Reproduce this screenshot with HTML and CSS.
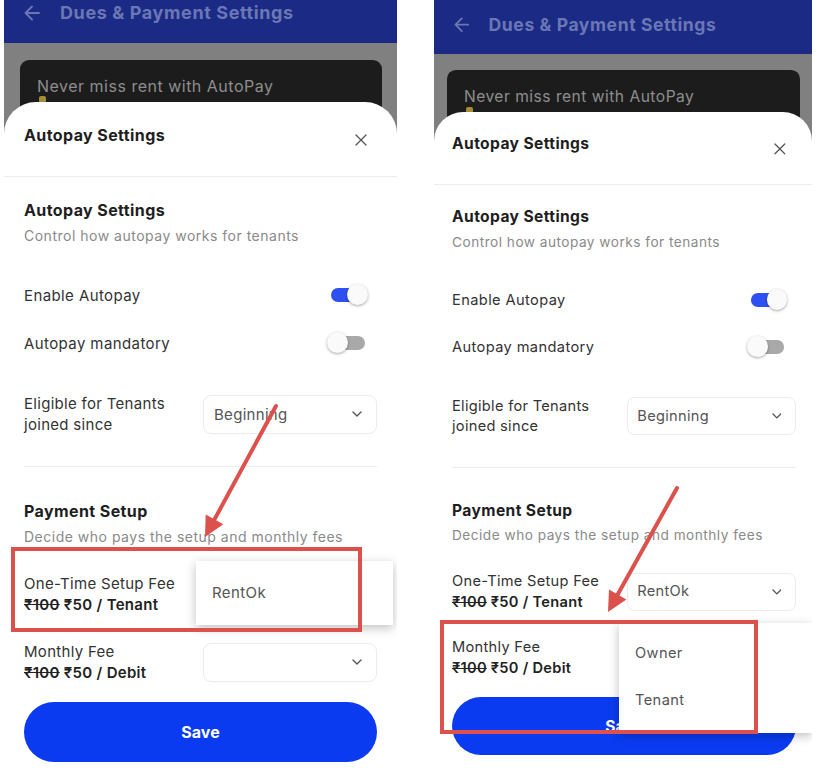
FILE: index.html
```html
<!DOCTYPE html>
<html lang="en">
<head>
    <meta charset="UTF-8">
    <meta name="viewport" content="width=device-width, initial-scale=1.0">
    <title>Autopay Settings</title>
    <link rel="stylesheet" href="styles.css">
</head>
<body>
    <div class="page">
        <!-- Left screen: setup fee dropdown open -->
        <div class="phone">
            <header class="appbar">
                <svg class="back" viewBox="0 0 16 22"><path d="M15 11H2M8 4.5L1.5 11 8 17.5" fill="none" stroke="currentColor" stroke-width="1.8" stroke-linecap="round" stroke-linejoin="round"/></svg>
                <h1>Dues &amp; Payment Settings</h1>
            </header>
            <div class="backdrop">
                <div class="promo">Never miss rent with AutoPay<span class="promo-emoji"></span></div>
            </div>
            <section class="sheet">
                <div class="sheet-head">
                    <h2>Autopay Settings</h2>
                    <svg class="close" viewBox="0 0 12 12"><path d="M1 1l10 10M11 1L1 11" stroke="#555" stroke-width="1.3" stroke-linecap="round"/></svg>
                </div>
                <div class="sheet-body">
                    <h3 class="section-title">Autopay Settings</h3>
                    <p class="section-sub">Control how autopay works for tenants</p>
                    <div class="toggles">
                        <div class="toggle-row"><span>Enable Autopay</span><span class="switch on"></span></div>
                        <div class="toggle-row"><span>Autopay mandatory</span><span class="switch"></span></div>
                    </div>
                    <div class="field-row eligible">
                        <div class="field-label">Eligible for Tenants<br>joined since</div>
                        <div class="select"><span>Beginning</span><svg class="chevron" viewBox="0 0 10 6"><path d="M1 1l4 4 4-4" fill="none" stroke="#555" stroke-width="1.4" stroke-linecap="round" stroke-linejoin="round"/></svg></div>
                    </div>
                    <hr class="divider">
                    <h3 class="section-title">Payment Setup</h3>
                    <p class="section-sub">Decide who pays the setup and monthly fees</p>
                    <div class="field-row fee-first">
                        <div class="field-label">One-Time Setup Fee<br><span class="fee-price"><s>₹100</s> ₹50 / Tenant</span></div>
                        <div class="select"><span></span><svg class="chevron" viewBox="0 0 10 6"><path d="M1 1l4 4 4-4" fill="none" stroke="#555" stroke-width="1.4" stroke-linecap="round" stroke-linejoin="round"/></svg></div>
                    </div>
                    <div class="field-row fee-second">
                        <div class="field-label">Monthly Fee<br><span class="fee-price"><s>₹100</s> ₹50 / Debit</span></div>
                        <div class="select"><span></span><svg class="chevron" viewBox="0 0 10 6"><path d="M1 1l4 4 4-4" fill="none" stroke="#555" stroke-width="1.4" stroke-linecap="round" stroke-linejoin="round"/></svg></div>
                    </div>
                    <button class="save">Save</button>
                </div>
            </section>
            <div class="menu menu-setup">
                <div class="menu-item">RentOk</div>
            </div>
        </div>

        <!-- Right screen: monthly fee dropdown open -->
        <div class="phone phone-right">
            <header class="appbar">
                <svg class="back" viewBox="0 0 16 22"><path d="M15 11H2M8 4.5L1.5 11 8 17.5" fill="none" stroke="currentColor" stroke-width="1.8" stroke-linecap="round" stroke-linejoin="round"/></svg>
                <h1>Dues &amp; Payment Settings</h1>
            </header>
            <div class="backdrop">
                <div class="promo">Never miss rent with AutoPay<span class="promo-emoji"></span></div>
            </div>
            <section class="sheet">
                <div class="sheet-head">
                    <h2>Autopay Settings</h2>
                    <svg class="close" viewBox="0 0 12 12"><path d="M1 1l10 10M11 1L1 11" stroke="#555" stroke-width="1.3" stroke-linecap="round"/></svg>
                </div>
                <div class="sheet-body">
                    <h3 class="section-title">Autopay Settings</h3>
                    <p class="section-sub">Control how autopay works for tenants</p>
                    <div class="toggles">
                        <div class="toggle-row"><span>Enable Autopay</span><span class="switch on"></span></div>
                        <div class="toggle-row"><span>Autopay mandatory</span><span class="switch"></span></div>
                    </div>
                    <div class="field-row eligible">
                        <div class="field-label">Eligible for Tenants<br>joined since</div>
                        <div class="select"><span>Beginning</span><svg class="chevron" viewBox="0 0 10 6"><path d="M1 1l4 4 4-4" fill="none" stroke="#555" stroke-width="1.4" stroke-linecap="round" stroke-linejoin="round"/></svg></div>
                    </div>
                    <hr class="divider">
                    <h3 class="section-title">Payment Setup</h3>
                    <p class="section-sub">Decide who pays the setup and monthly fees</p>
                    <div class="field-row fee-first">
                        <div class="field-label">One-Time Setup Fee<br><span class="fee-price"><s>₹100</s> ₹50 / Tenant</span></div>
                        <div class="select"><span>RentOk</span><svg class="chevron" viewBox="0 0 10 6"><path d="M1 1l4 4 4-4" fill="none" stroke="#555" stroke-width="1.4" stroke-linecap="round" stroke-linejoin="round"/></svg></div>
                    </div>
                    <div class="field-row fee-second">
                        <div class="field-label">Monthly Fee<br><span class="fee-price"><s>₹100</s> ₹50 / Debit</span></div>
                        <div class="select"><span></span><svg class="chevron" viewBox="0 0 10 6"><path d="M1 1l4 4 4-4" fill="none" stroke="#555" stroke-width="1.4" stroke-linecap="round" stroke-linejoin="round"/></svg></div>
                    </div>
                    <button class="save">Save</button>
                </div>
            </section>
            <div class="menu menu-fee">
                <div class="menu-item">Owner</div>
                <div class="menu-item">Tenant</div>
            </div>
        </div>

        <!-- Red annotation marks drawn over both screens -->
        <svg class="annotations" viewBox="0 0 818 768">
            <rect x="13" y="549" width="347" height="81" fill="none" stroke="#dc514c" stroke-width="4"/>
            <line x1="276" y1="406" x2="214.5" y2="519.4" stroke="#dc514c" stroke-width="4" stroke-linecap="round"/>
            <polygon points="205,537 223.3,524.2 205.7,514.6" fill="#dc514c"/>
            <rect x="442" y="622" width="314" height="110" fill="none" stroke="#dc514c" stroke-width="4"/>
            <line x1="677" y1="488" x2="617.7" y2="594.5" stroke="#dc514c" stroke-width="4" stroke-linecap="round"/>
            <polygon points="608,612 626.4,599.4 609,589.6" fill="#dc514c"/>
        </svg>
    </div>
</body>
</html>
```

FILE: styles.css
```css
* {
    margin: 0;
    padding: 0;
    box-sizing: border-box;
}

body {
    width: 818px;
    height: 768px;
    overflow: hidden;
    background: #fff;
    font-family: Inter, "Noto Sans", "DejaVu Sans", sans-serif;
}

.page {
    position: relative;
    display: flex;
    gap: 37px;
    height: 768px;
    padding-left: 4px;
}

.phone {
    position: relative;
    width: 393px;
    height: 768px;
    flex-shrink: 0;
    display: flex;
    flex-direction: column;
    background: #808080;
    overflow: hidden;
}

.appbar {
    height: 43px;
    flex-shrink: 0;
    display: flex;
    align-items: flex-start;
    gap: 20px;
    padding: 2px 20px 0;
    background: #1b2a85;
    color: #6b77b5;
}

.back {
    width: 16px;
    height: 22px;
}

.appbar h1 {
    font-size: 18px;
    line-height: 22px;
    font-weight: 700;
    letter-spacing: 0.6px;
}

.backdrop {
    flex-shrink: 0;
    padding: 17px 15px 0 16px;
}

.promo {
    height: 80px;
    padding: 16px 17px;
    background: #1c1c1c;
    border-radius: 9px;
    color: #8e8e8e;
    font-size: 16px;
    line-height: 20px;
    letter-spacing: 0.5px;
}

.promo-emoji {
    display: block;
    width: 7px;
    height: 7px;
    margin-left: 2px;
    border-radius: 2px;
    background: #a48d34;
}

.sheet {
    position: relative;
    flex: 1;
    margin-top: -38px;
    background: #fff;
    border-radius: 32px 32px 0 0;
}

.sheet-head {
    height: 75px;
    display: flex;
    justify-content: space-between;
    align-items: flex-start;
    padding: 22px 30px 0 20px;
    border-bottom: 1px solid #ececec;
}

.sheet-head h2 {
    font-size: 16px;
    line-height: 22px;
    font-weight: 700;
    color: #1e1e1e;
    letter-spacing: 0.4px;
}

.close {
    width: 12px;
    height: 12px;
    margin-top: 10px;
}

.sheet-body {
    padding: 22px 20px 0;
}

.section-title {
    font-size: 16px;
    line-height: 22px;
    font-weight: 700;
    color: #1e1e1e;
    letter-spacing: 0.4px;
}

.section-sub {
    margin-top: 5px;
    font-size: 14px;
    line-height: 20px;
    color: #8a8a8a;
    letter-spacing: 0.5px;
}

.toggles {
    margin-top: 25px;
}

.toggle-row {
    height: 48px;
    display: flex;
    align-items: center;
    justify-content: space-between;
    font-size: 15px;
    color: #333;
    letter-spacing: 0.4px;
}

.switch {
    position: relative;
    width: 41px;
    height: 22px;
    margin-right: 9px;
}

.switch::before {
    content: "";
    position: absolute;
    left: 4px;
    top: 4px;
    width: 34px;
    height: 14px;
    border-radius: 7px;
    background: #a9a9a9;
}

.switch::after {
    content: "";
    position: absolute;
    left: 0;
    top: 0;
    width: 21px;
    height: 21px;
    border-radius: 50%;
    background: #fafafa;
    box-shadow: 0 1px 3px rgba(0, 0, 0, 0.35);
}

.switch.on::before {
    background: #2f50f0;
}

.switch.on::after {
    left: 20px;
}

.field-row {
    height: 39px;
    display: grid;
    grid-template-columns: 179px 1fr;
    align-items: center;
    font-size: 15px;
    line-height: 21px;
    color: #333;
    letter-spacing: 0.3px;
}

.eligible {
    margin-top: 26px;
}

.select {
    height: 39px;
    display: flex;
    align-items: center;
    justify-content: space-between;
    padding: 0 14px 0 10px;
    border: 1px solid #ececec;
    border-radius: 8px;
    color: #555;
}

.chevron {
    width: 10px;
    height: 6px;
}

.divider {
    margin-top: 34px;
    border: 0;
    border-top: 1px solid #ececec;
}

.divider + .section-title {
    margin-top: 33px;
}

.fee-first {
    margin-top: 26px;
}

.fee-second {
    margin-top: 29px;
}

.fee-price {
    font-weight: 600;
    color: #222;
}

.save {
    width: 100%;
    height: 60px;
    margin-top: 22px;
    border: 0;
    border-radius: 30px;
    background: #0a3bf0;
    color: #fff;
    font-family: inherit;
    font-size: 16px;
    font-weight: 700;
}

.menu {
    position: absolute;
    background: #fff;
    box-shadow: 0 3px 10px rgba(0, 0, 0, 0.25);
    color: #555;
    font-size: 15px;
    letter-spacing: 0.4px;
}

.menu-setup {
    left: 192px;
    top: 561px;
    width: 197px;
    height: 64px;
    padding: 22px 16px;
    line-height: 20px;
}

.menu-item {
    line-height: 20px;
}

/* right screenshot is a touch smaller and cropped lower */
.phone-right {
    zoom: 0.975;
    width: 388px;
    height: 788px;
}

.phone-right .appbar {
    height: 55.4px;
    padding-top: 14.6px;
}

.phone-right .backdrop {
    padding: 16.4px 12.3px 0 13.3px;
}

.phone-right .promo {
    padding: 17.7px 17.4px;
}

.phone-right .sheet {
    margin-top: -37px;
    border-radius: 30px 30px 0 0;
}

.phone-right .sheet-head {
    padding: 22px 27px 0 18.5px;
}

.phone-right .sheet-body {
    padding: 22px 16.7px 0 18.5px;
}

.menu-fee {
    left: 189.7px;
    top: 639px;
    width: 198px;
    height: 113px;
    padding-top: 8px;
}

.menu-fee .menu-item {
    padding: 14px 16.5px;
}

.annotations {
    position: absolute;
    left: 0;
    top: 0;
    width: 818px;
    height: 768px;
    pointer-events: none;
}
```
